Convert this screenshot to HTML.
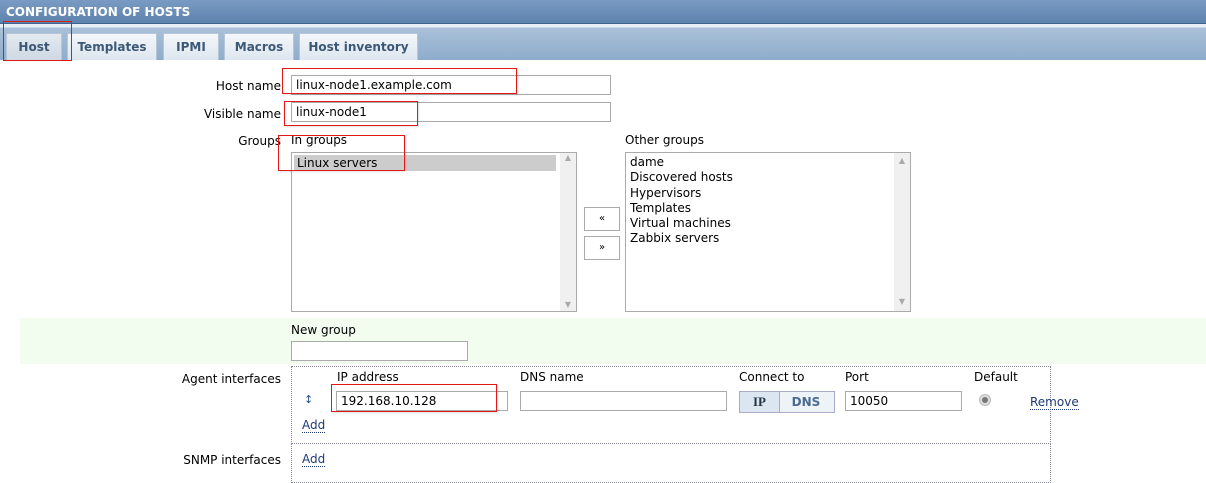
<!DOCTYPE html>
<html><head><meta charset="utf-8"><style>
*{box-sizing:border-box;margin:0;padding:0}
body{width:1206px;height:480px;overflow:hidden;background:#fff;font-family:"DejaVu Sans","Liberation Sans",sans-serif;font-size:12px;color:#000;position:relative}
.a{position:absolute}
.hdr{left:0;top:0;width:1206px;height:24px;background:linear-gradient(#7a9cc4,#5d82ad);color:#fff;font-weight:bold;font-size:12px;padding:5px 6px;border-bottom:1px solid #3e6490}
.tabbar{left:0;top:24px;width:1206px;height:36px;background:linear-gradient(#e8eef5 0,#e8eef5 3px,#a9c0d8 4px,#8eaccb 100%)}
.tab{top:33px;height:27px;background:linear-gradient(#f4f7fa,#dde6ef);border:1px solid #b4c6d8;border-bottom:none;font-weight:bold;color:#3b5877;font-size:12px;text-align:center;line-height:26px}
.lbl{text-align:right;font-size:12px}
.inp{border:1px solid #aaa;background:#fff;height:20px;padding:1px 4px;font-size:12px;line-height:17px}
.red{border:1px solid #e01818;box-shadow:1px 1px 2px rgba(0,0,0,.12)}
.lst{border:1px solid #aaa;background:#fff}
.sb{position:absolute;right:0;top:0;bottom:0;width:16px;background:#f0f0f0;color:#aaa;font-size:8px;text-align:center}
.btn{width:36px;height:24px;border:1px solid #aaa;background:#fff;text-align:center;line-height:22px;font-size:10px}
a{color:#1f3a73;text-decoration:none;border-bottom:1px dotted #1f3a73}
</style></head><body>
<div class="a hdr">CONFIGURATION OF HOSTS</div>
<div class="a tabbar"></div>
<div class="a tab" style="left:6px;width:56px;background:linear-gradient(#e3e9ef,#cfd9e3)">Host</div>
<div class="a tab" style="left:67px;width:90px">Templates</div>
<div class="a tab" style="left:163px;width:56px">IPMI</div>
<div class="a tab" style="left:224px;width:70px">Macros</div>
<div class="a tab" style="left:299px;width:119px">Host inventory</div>
<div class="a" style="left:3px;top:21px;width:69px;height:40px;border:1px solid #e01818"></div>

<div class="a lbl" style="left:150px;top:79px;width:131px">Host name</div>
<div class="a inp" style="left:291px;top:75px;width:320px">linux-node1.example.com</div>
<div class="a red" style="left:282px;top:68px;width:235px;height:26px"></div>
<div class="a lbl" style="left:150px;top:107px;width:131px">Visible name</div>
<div class="a inp" style="left:291px;top:102px;width:320px">linux-node1</div>
<div class="a red" style="left:284px;top:101px;width:134px;height:25px"></div>
<div class="a lbl" style="left:150px;top:134px;width:131px">Groups</div>
<div class="a" style="left:291px;top:133px">In groups</div>
<div class="a lst" style="left:291px;top:152px;width:286px;height:160px"><div style="background:#ccc;margin:2px 20px 0 2px;padding-left:3px;height:16px;line-height:16px">Linux servers</div><div class="sb">▲<div style="position:absolute;bottom:2px;width:16px">▼</div></div></div>
<div class="a red" style="left:278px;top:135px;width:127px;height:36px"></div>
<div class="a btn" style="left:584px;top:207px">«</div>
<div class="a btn" style="left:584px;top:236px">»</div>
<div class="a" style="left:625px;top:133px">Other groups</div>
<div class="a lst" style="left:625px;top:152px;width:286px;height:160px;padding:2px 4px;line-height:15.3px">dame<br>Discovered hosts<br>Hypervisors<br>Templates<br>Virtual machines<br>Zabbix servers<div class="sb">▲<div style="position:absolute;bottom:2px;width:16px">▼</div></div></div>

<div class="a" style="left:20px;top:318px;width:1186px;height:46px;background:#f2fdf0"></div>
<div class="a" style="left:291px;top:323px">New group</div>
<div class="a inp" style="left:291px;top:341px;width:177px;height:20px"></div>

<div class="a lbl" style="left:150px;top:372px;width:131px">Agent interfaces</div>
<div class="a" style="left:291px;top:366px;width:760px;height:78px;border:1px dotted #889"></div>
<div class="a" style="left:291px;top:443px;width:760px;height:40px;border:1px dotted #889"></div>
<div class="a" style="left:337px;top:370px">IP address</div>
<div class="a" style="left:520px;top:370px">DNS name</div>
<div class="a" style="left:739px;top:370px">Connect to</div>
<div class="a" style="left:845px;top:370px">Port</div>
<div class="a" style="left:974px;top:370px">Default</div>
<div class="a" style="left:304px;top:393px;color:#2a4a8a;font-size:11px">↕</div>
<div class="a inp" style="left:336px;top:391px;width:172px">192.168.10.128</div>
<div class="a red" style="left:331px;top:384px;width:166px;height:28px"></div>
<div class="a inp" style="left:520px;top:391px;width:207px"></div>
<div class="a" style="left:739px;top:391px;width:96px;height:22px;border:1px solid #aac;font-weight:bold;color:#4a6a90;font-family:'Liberation Serif',serif;font-size:13px;background:#eef3f8"><span style="display:inline-block;width:40px;height:20px;background:#dbe6f1;border-right:1px solid #aac;text-align:center;line-height:20px;color:#234">IP</span><span style="display:inline-block;width:52px;text-align:center;line-height:20px;font-family:'DejaVu Sans',sans-serif;font-size:12px">DNS</span></div>
<div class="a inp" style="left:845px;top:391px;width:117px">10050</div>
<div class="a" style="left:979px;top:394px;width:12px;height:12px;border-radius:50%;background:#ddd;border:1px solid #bbb"><div style="margin:2px;width:6px;height:6px;border-radius:50%;background:#777"></div></div>
<div class="a" style="left:1030px;top:395px"><a>Remove</a></div>
<div class="a" style="left:302px;top:418px"><a>Add</a></div>
<div class="a lbl" style="left:150px;top:453px;width:131px">SNMP interfaces</div>
<div class="a" style="left:302px;top:452px"><a>Add</a></div>
</body></html>
